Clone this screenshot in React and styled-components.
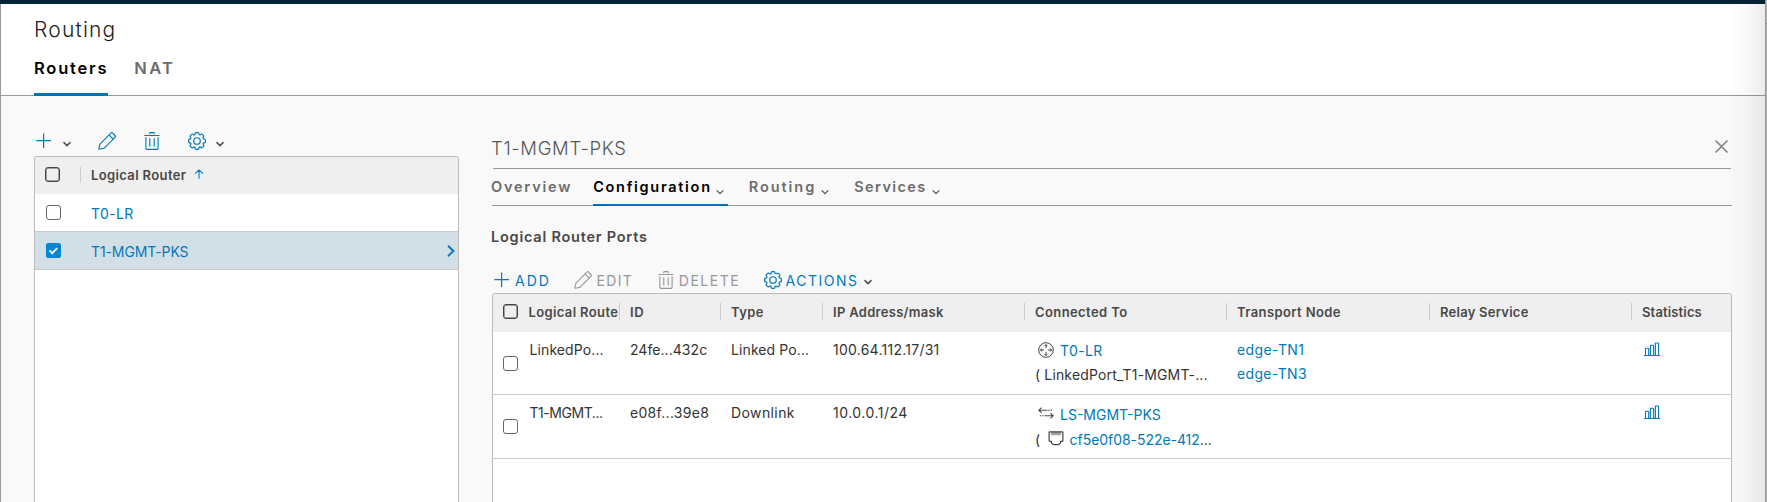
import React from "react";
import styled, { createGlobalStyle, css } from "styled-components";

const link = "#0079b8";
const rule = "#9a9a9a";

const GlobalStyle = createGlobalStyle`
  * { box-sizing: border-box; }
  body {
    margin: 0;
    overflow: hidden;
    font-family: Inter, "Liberation Sans", sans-serif;
    font-size: 14px;
    color: #333;
  }
`;

const Window = styled.div`
  position: relative;
  display: flex;
  width: 1767px;
  height: 502px;
  overflow: hidden;
`;

const Page = styled.div`
  flex: 1;
  display: flex;
  flex-direction: column;
  min-width: 0;
  border-top: 4px solid #002235;
`;

const PageInner = styled.div`
  flex: 1;
  display: flex;
  flex-direction: column;
  min-height: 0;
  border-left: 1px solid ${rule};
  background: #f9f9f9;
`;

const WindowEdge = styled.div`
  width: 2px;
  border-left: 1px solid #969696;
  background: linear-gradient(#b4b4b4 23px, #8a8a8a 23px, #8a8a8a 24px, #b0b0b0 24px);
`;

const EdgeShade = styled.div`
  position: absolute;
  top: 4px;
  right: 2px;
  bottom: 0;
  width: 38px;
  pointer-events: none;
  background: linear-gradient(to right, rgba(0, 0, 0, 0), rgba(0, 0, 0, 0.02) 45%, rgba(0, 0, 0, 0.075));
`;

const Header = styled.header`
  height: 92px;
  padding: 12px 0 0 33px;
  background: #fff;
  border-bottom: 1px solid ${rule};
`;

const PageTitle = styled.h1`
  margin: 0;
  font-size: 21px;
  font-weight: 300;
  line-height: 28px;
  letter-spacing: 1.2px;
  color: #222;
`;

const MainTabs = styled.nav`
  display: flex;
  gap: 26px;
`;

const MainTab = styled.a`
  height: 52px;
  border-bottom: 3px solid ${(p) => (p.$active ? "#0072b5" : "transparent")};
  font-size: 16.5px;
  font-weight: 600;
  line-height: 48px;
  letter-spacing: ${(p) => p.$track}px;
  color: ${(p) => (p.$active ? "#000" : "#6c6c6c")};
`;

const Body = styled.main`
  flex: 1;
  display: flex;
  gap: 33px;
  min-height: 0;
  padding-left: 33px;
`;

const RouterPanel = styled.section`
  display: flex;
  flex-direction: column;
  width: 425px;
`;

const IconBar = styled.div`
  display: flex;
  align-items: flex-end;
  gap: 25px;
  height: 60px;
  padding-bottom: 5px;
  color: ${link};
`;

const IconTool = styled.span`
  display: flex;
  align-items: center;
  gap: 8px;
`;

const Glyph = styled.svg`
  display: block;
  flex: none;
  fill: currentColor;
`;

const LineGlyph = styled(Glyph)`
  fill: none;
  stroke: currentColor;
`;

const CaretGlyph = styled(LineGlyph)`
  color: #555;
  margin-top: ${(p) => p.$drop || 0}px;
  margin-left: ${(p) => p.$lead || 0}px;
`;

const Grid = styled.div`
  flex: 1;
  background: #fff;
  border: 1px solid #bcbcbc;
  border-bottom: 0;
  border-radius: 3px 3px 0 0;
  overflow: hidden;
`;

const RouterHead = styled.div`
  display: flex;
  align-items: center;
  height: 37px;
  padding: 0 0 2px 10px;
  background: #efefef;
  color: #484848;
`;

const RouterRow = styled.div`
  display: flex;
  align-items: center;
  height: 38px;
  padding: 0 11px;
  border-bottom: 1px solid #ccc;
  background: ${(p) => (p.$selected ? "#d3dfe6" : "#fff")};
  color: ${link};
`;

const RouterName = styled.a`
  flex: 1;
  padding: 1px 0 0 30px;
  letter-spacing: ${(p) => p.$track || 0}px;
`;

const HeadLabel = styled.span`
  font-size: 13px;
  font-weight: 600;
  letter-spacing: ${(p) => p.$track || 0.4}px;
  white-space: nowrap;
`;

const RouterHeadLabel = styled(HeadLabel)`
  margin-left: 20px;
  padding-left: 10px;
  line-height: 16px;
  border-left: 1px solid #ccc;
`;

const SortMark = styled(LineGlyph)`
  margin-left: 8px;
  margin-top: -2px;
  color: ${link};
`;

const OpenMark = styled(LineGlyph)`
  margin-right: -8px;
`;

const Check = styled.span`
  display: flex;
  align-items: center;
  justify-content: center;
  flex: none;
  width: 15px;
  height: 15px;
  border: 1px solid #666;
  border-radius: 3px;
  background: #fff;
  color: #fff;
  ${(p) => p.$strong && css`
    border: 1.5px solid #444;
    box-shadow: inset 0 0 0 0.5px #555;
    background: transparent;
  `}
  ${(p) => p.$checked && css`
    border-color: #0089d0;
    border-radius: 2px;
    background: #0089d0;
  `}
`;

const Detail = styled.section`
  display: flex;
  flex-direction: column;
  width: 1240px;
`;

const DetailHead = styled.div`
  display: flex;
  align-items: center;
  justify-content: space-between;
  height: 41px;
  margin: 32px 1px 0;
  padding-right: 3px;
  border-bottom: 1px solid ${rule};
`;

const DetailTitle = styled.h2`
  margin: 0 0 0 -2px;
  font-size: 18.5px;
  font-weight: 300;
  letter-spacing: 0.65px;
  color: #565656;
`;

const CloseMark = styled(LineGlyph)`
  color: #858585;
  margin-top: -3px;
`;

const DetailTabs = styled.nav`
  display: flex;
  gap: 21px;
  height: 37px;
  border-bottom: 1px solid ${rule};
`;

const DetailTab = styled.a`
  display: flex;
  align-items: center;
  height: 37px;
  border-bottom: 2px solid ${(p) => (p.$active ? "#0072b5" : "transparent")};
  font-size: 14.5px;
  font-weight: 600;
  letter-spacing: ${(p) => p.$track}px;
  color: ${(p) => (p.$active ? "#000" : "#6c6c6c")};
  svg { margin-right: 3px; }
  &:first-child { margin-left: -1px; }
`;

const SectionTitle = styled.h3`
  margin: 0 0 0 -1px;
  font-size: 14.5px;
  font-weight: 600;
  line-height: 62px;
  letter-spacing: 0.77px;
  color: #484848;
`;

const ActionBar = styled.div`
  display: flex;
  gap: 22.5px;
  height: 25px;
`;

const Action = styled.span`
  display: flex;
  align-items: center;
  gap: 3px;
  height: 24px;
  letter-spacing: ${(p) => p.$track}px;
  color: ${(p) => (p.$disabled ? "#979797" : link)};
  > svg:first-child { margin-top: -1px; }
`;

const portColumns = css`
  display: grid;
  grid-template-columns: 127px 101px 102px 202px 202px 203px 202px 1fr;
`;

const PortHead = styled.div`
  ${portColumns}
  height: 38px;
  padding-top: 9px;
  background: #efefef;
  color: #484848;
`;

const PortHeadCell = styled.div`
  display: flex;
  align-items: center;
  gap: 11px;
  height: 17px;
  padding-left: ${(p) => p.$pad || 10}px;
  border-right: 1px solid #ccc;
  &:last-child { border-right: 0; }
`;

const PortNameLabel = styled(HeadLabel)`
  padding-top: 1px;
`;

const PortRow = styled.div`
  ${portColumns}
  height: ${(p) => p.$height}px;
  border-bottom: 1px solid #ccc;
`;

const PortCell = styled.div`
  padding: ${(p) => (p.$low ? 7 : 6)}px 0 0 10px;
  line-height: ${(p) => p.$leading || 24}px;
  white-space: nowrap;
`;

const NameCell = styled.div`
  display: flex;
  align-items: center;
  gap: 11.5px;
  padding-left: 10px;
`;

const PortName = styled.span`
  align-self: flex-start;
  padding-top: 6px;
  line-height: 24px;
  letter-spacing: ${(p) => p.$track || 0}px;
`;

const Line = styled.div`
  display: flex;
  align-items: center;
`;

const Value = styled.span`
  letter-spacing: ${(p) => p.$track || 0}px;
  color: ${(p) => (p.$link ? link : "inherit")};
  white-space: pre;
`;

const ObjectGlyph = styled(LineGlyph)`
  margin: -3px 6px 0 ${(p) => p.$lead ?? 3}px;
  color: #444;
`;

const StatsGlyph = styled(LineGlyph)`
  margin: 4px 0 0 2px;
  color: ${link};
`;

const Plus = () => (
  <LineGlyph width="20" height="20" viewBox="0 0 20 20" strokeWidth="1.2" strokeLinecap="round">
    <path d="M9.6 2.9v13.7M2.8 9.7h13.7" />
  </LineGlyph>
);

const Caret = ({ drop, lead, weight = 1.6 }) => (
  <CaretGlyph $drop={drop} $lead={lead} width="10" height="10" viewBox="0 0 10 10" strokeWidth={weight} strokeLinecap="round" strokeLinejoin="round">
    <path d="M2 3.6l3 3 3-3" />
  </CaretGlyph>
);

const Pencil = () => (
  <Glyph width="20" height="20" viewBox="0 0 36 36">
    <path fillRule="evenodd" d="M33.87,8.32,28,2.42a2.07,2.07,0,0,0-2.92,0L4.27,23.2l-1.9,8.2a2.06,2.06,0,0,0,2,2.5,2.14,2.14,0,0,0,.43,0L13.09,32,33.87,11.24A2.07,2.07,0,0,0,33.87,8.32ZM12.09,30.2,4.32,31.83l1.77-7.62L21.66,8.7l6,6ZM29,13.25l-6-6,3.48-3.46,5.9,6Z" />
  </Glyph>
);

const Trash = () => (
  <Glyph width="20" height="20" viewBox="0 0 36 36">
    <path d="M27.14,34H8.86A2.93,2.93,0,0,1,6,31V11.23H8V31a.93.93,0,0,0,.86,1H27.14A.93.93,0,0,0,28,31V11.23h2V31A2.93,2.93,0,0,1,27.14,34Z" />
    <path d="M30.78,9H5A1,1,0,0,1,5,7H30.78a1,1,0,0,1,0,2Z" />
    <path d="M21 13h2v15h-2zM13 13h2v15h-2z" />
    <path d="M23,5.86H21.1V4H14.9V5.86H13V4a2,2,0,0,1,1.9-2h6.2A2,2,0,0,1,23,4Z" />
  </Glyph>
);

const Gear = () => (
  <LineGlyph width="20" height="20" viewBox="-1 -1 38 38" strokeWidth="2.3">
    <circle cx="18" cy="18" r="6.2" />
    <path d="M32.8,14.7L30,13.8l-0.6-1.5l1.4-2.6c0.3-0.6,0.2-1.4-0.3-1.9l-2.4-2.4c-0.5-0.5-1.3-0.6-1.9-0.3l-2.6,1.4l-1.5-0.6l-0.9-2.8C21,2.5,20.4,2,19.7,2h-3.4c-0.7,0-1.3,0.5-1.4,1.2L14,6c-0.6,0.1-1.1,0.3-1.6,0.6L9.8,5.2C9.2,4.9,8.4,5,7.9,5.5L5.5,7.9C5,8.4,4.9,9.2,5.2,9.8l1.3,2.5c-0.2,0.5-0.4,1.1-0.6,1.6l-2.8,0.9C2.5,15,2,15.6,2,16.3v3.4c0,0.7,0.5,1.3,1.2,1.5L6,22.1l0.6,1.5l-1.4,2.6c-0.3,0.6-0.2,1.4,0.3,1.9l2.4,2.4c0.5,0.5,1.3,0.6,1.9,0.3l2.6-1.4l1.5,0.6l0.9,2.9c0.2,0.6,0.8,1.1,1.5,1.1h3.4c0.7,0,1.3-0.5,1.5-1.1l0.9-2.9l1.5-0.6l2.6,1.4c0.6,0.3,1.4,0.2,1.9-0.3l2.4-2.4c0.5-0.5,0.6-1.3,0.3-1.9l-1.4-2.6l0.6-1.5l2.9-0.9c0.6-0.2,1.1-0.8,1.1-1.5v-3.4C34,15.6,33.5,14.9,32.8,14.7z" />
  </LineGlyph>
);

const RouterIcon = () => (
  <ObjectGlyph width="16" height="16" viewBox="0 0 16 16" strokeWidth="1">
    <circle cx="8" cy="8" r="7.3" />
    <path d="M8 2.6v3.6M6.7 4L8 2.6 9.3 4M8 13.4V9.8M6.7 12L8 13.4 9.3 12M2.4 8H6M3.9 6.7L2.4 8l1.5 1.3M13.6 8H10M12.1 6.7L13.6 8l-1.5 1.3" />
  </ObjectGlyph>
);

const SwitchIcon = () => (
  <ObjectGlyph width="16" height="12" viewBox="0 0 16 12" strokeWidth="1.1">
    <path d="M.8 3.2h8.6M3.6.6L.9 3.2l2.7 2.6M15.2 8.8H6.6M12.4 6.2l2.7 2.6-2.7 2.6" />
    <path d="M10.3 3.2h1.5M12.6 3.2h1.5M1.9 8.8h1.3M4.2 8.8h1.4" />
  </ObjectGlyph>
);

const PortIcon = () => (
  <ObjectGlyph $lead={7.5} width="16" height="15" viewBox="0 0 16 15" strokeWidth="1.2">
    <path d="M1.6.9h12.8q.5 0 .5.5v8q0 .9-.9.9h-1.4v1.3q0 .5-.5.8l-1.7 1.3H5.6l-1.7-1.3q-.5-.3-.5-.8v-1.3H2q-.9 0-.9-.9v-8q0-.5.5-.5z" />
    <path strokeWidth="1" d="M4 1v3.2M6 1v3.2M8 1v3.2M10 1v3.2M12 1v3.2" />
  </ObjectGlyph>
);

const Stats = () => (
  <StatsGlyph width="16" height="15" viewBox="0 0 16 15" strokeWidth="1.1">
    <path d="M0 13.5h16M1.5 13.5V6.9q0-.6.6-.6h2q.6 0 .6.6v6.6M6.4 13.5V3.9q0-.6.6-.6h2q.6 0 .6.6v9.6M11.4 13.5V1.6q0-.6.6-.6h2q.6 0 .6.6v11.9" />
  </StatsGlyph>
);

export default function App() {
  return (
    <>
      <GlobalStyle />
      <Window>
        <Page>
          <PageInner>
            <Header>
              <PageTitle>Routing</PageTitle>
              <MainTabs>
                <MainTab $active $track={1.8}>Routers</MainTab>
                <MainTab $track={2.3}>NAT</MainTab>
              </MainTabs>
            </Header>
            <Body>
              <RouterPanel>
                <IconBar>
                  <IconTool><Plus /><Caret drop={5} /></IconTool>
                  <IconTool><Pencil /></IconTool>
                  <IconTool><Trash /></IconTool>
                  <IconTool><Gear /><Caret drop={5} /></IconTool>
                </IconBar>
                <Grid>
                  <RouterHead>
                    <Check $strong />
                    <RouterHeadLabel $track={0.37}>Logical Router</RouterHeadLabel>
                    <SortMark width="10" height="10" viewBox="0 0 10 10" strokeWidth="1.1" strokeLinecap="round">
                      <path d="M5 9.2V1M1.4 4.4L5 .9l3.6 3.5" />
                    </SortMark>
                  </RouterHead>
                  <RouterRow>
                    <Check />
                    <RouterName $track={0.4}>T0-LR</RouterName>
                  </RouterRow>
                  <RouterRow $selected>
                    <Check $checked>
                      <LineGlyph width="11" height="11" viewBox="0 0 11 11" strokeWidth="1.9">
                        <path d="M1.5 5.4l2.7 2.7 5-5" />
                      </LineGlyph>
                    </Check>
                    <RouterName $track={-0.1}>T1-MGMT-PKS</RouterName>
                    <OpenMark width="8" height="12" viewBox="0 0 8 12" strokeWidth="1.9">
                      <path d="M1 .8L6.4 6 1 11.2" />
                    </OpenMark>
                  </RouterRow>
                </Grid>
              </RouterPanel>

              <Detail>
                <DetailHead>
                  <DetailTitle>T1-MGMT-PKS</DetailTitle>
                  <CloseMark width="13" height="13" viewBox="0 0 13 13" strokeWidth="1.7" strokeLinecap="round">
                    <path d="M1 1l11 11M12 1L1 12" />
                  </CloseMark>
                </DetailHead>
                <DetailTabs>
                  <DetailTab $track={1.8}>Overview</DetailTab>
                  <DetailTab $active $track={1.7}>Configuration<Caret drop={10} lead={3} weight={1.3} /></DetailTab>
                  <DetailTab $track={1.95}>Routing<Caret drop={10} lead={4} weight={1.3} /></DetailTab>
                  <DetailTab $track={1.4}>Services<Caret drop={10} lead={4} weight={1.3} /></DetailTab>
                </DetailTabs>
                <SectionTitle>Logical Router Ports</SectionTitle>
                <ActionBar>
                  <Action $track={2}><Plus />ADD</Action>
                  <Action $disabled $track={1.4}><Pencil />EDIT</Action>
                  <Action $disabled $track={1.5}><Trash />DELETE</Action>
                  <Action $track={1.5}><Gear />ACTIONS<Caret drop={4} lead={1} /></Action>
                </ActionBar>
                <Grid>
                  <PortHead>
                    <PortHeadCell $pad={9.5}>
                      <Check $strong />
                      <PortNameLabel $track={0.37}>Logical Route</PortNameLabel>
                    </PortHeadCell>
                    <PortHeadCell><HeadLabel $track={0.6}>ID</HeadLabel></PortHeadCell>
                    <PortHeadCell><HeadLabel>Type</HeadLabel></PortHeadCell>
                    <PortHeadCell><HeadLabel $track={0.3}>IP Address/mask</HeadLabel></PortHeadCell>
                    <PortHeadCell><HeadLabel $track={0.4}>Connected To</HeadLabel></PortHeadCell>
                    <PortHeadCell><HeadLabel>Transport Node</HeadLabel></PortHeadCell>
                    <PortHeadCell><HeadLabel $track={0.25}>Relay Service</HeadLabel></PortHeadCell>
                    <PortHeadCell><HeadLabel $track={0.15}>Statistics</HeadLabel></PortHeadCell>
                  </PortHead>
                  <PortRow $height={63}>
                    <NameCell><Check /><PortName $track={0.1}>LinkedPo...</PortName></NameCell>
                    <PortCell><Value $track={0.05}>24fe...432c</Value></PortCell>
                    <PortCell><Value $track={0.1}>Linked Po...</Value></PortCell>
                    <PortCell><Value $track={0.25}>100.64.112.17/31</Value></PortCell>
                    <PortCell $low>
                      <Line><RouterIcon /><Value $link $track={0.4}>T0-LR</Value></Line>
                      <Line><Value $track={0.15}>( LinkedPort_T1-MGMT-...</Value></Line>
                    </PortCell>
                    <PortCell>
                      <Line><Value $link $track={0.4}>edge-TN1</Value></Line>
                      <Line><Value $link $track={0.35}>edge-TN3</Value></Line>
                    </PortCell>
                    <PortCell />
                    <PortCell><Stats /></PortCell>
                  </PortRow>
                  <PortRow $height={64}>
                    <NameCell><Check /><PortName $track={-0.45}>T1-MGMT...</PortName></NameCell>
                    <PortCell><Value $track={0.3}>e08f...39e8</Value></PortCell>
                    <PortCell><Value $track={0.4}>Downlink</Value></PortCell>
                    <PortCell><Value $track={0.5}>10.0.0.1/24</Value></PortCell>
                    <PortCell $low $leading={25}>
                      <Line><SwitchIcon /><Value $link>LS-MGMT-PKS</Value></Line>
                      <Line>
                        <Value>(</Value>
                        <PortIcon />
                        <Value $link $track={-0.05}>cf5e0f08-522e-412</Value>
                        <Value>...</Value>
                      </Line>
                    </PortCell>
                    <PortCell />
                    <PortCell />
                    <PortCell><Stats /></PortCell>
                  </PortRow>
                </Grid>
              </Detail>
            </Body>
          </PageInner>
        </Page>
        <WindowEdge />
        <EdgeShade />
      </Window>
    </>
  );
}
